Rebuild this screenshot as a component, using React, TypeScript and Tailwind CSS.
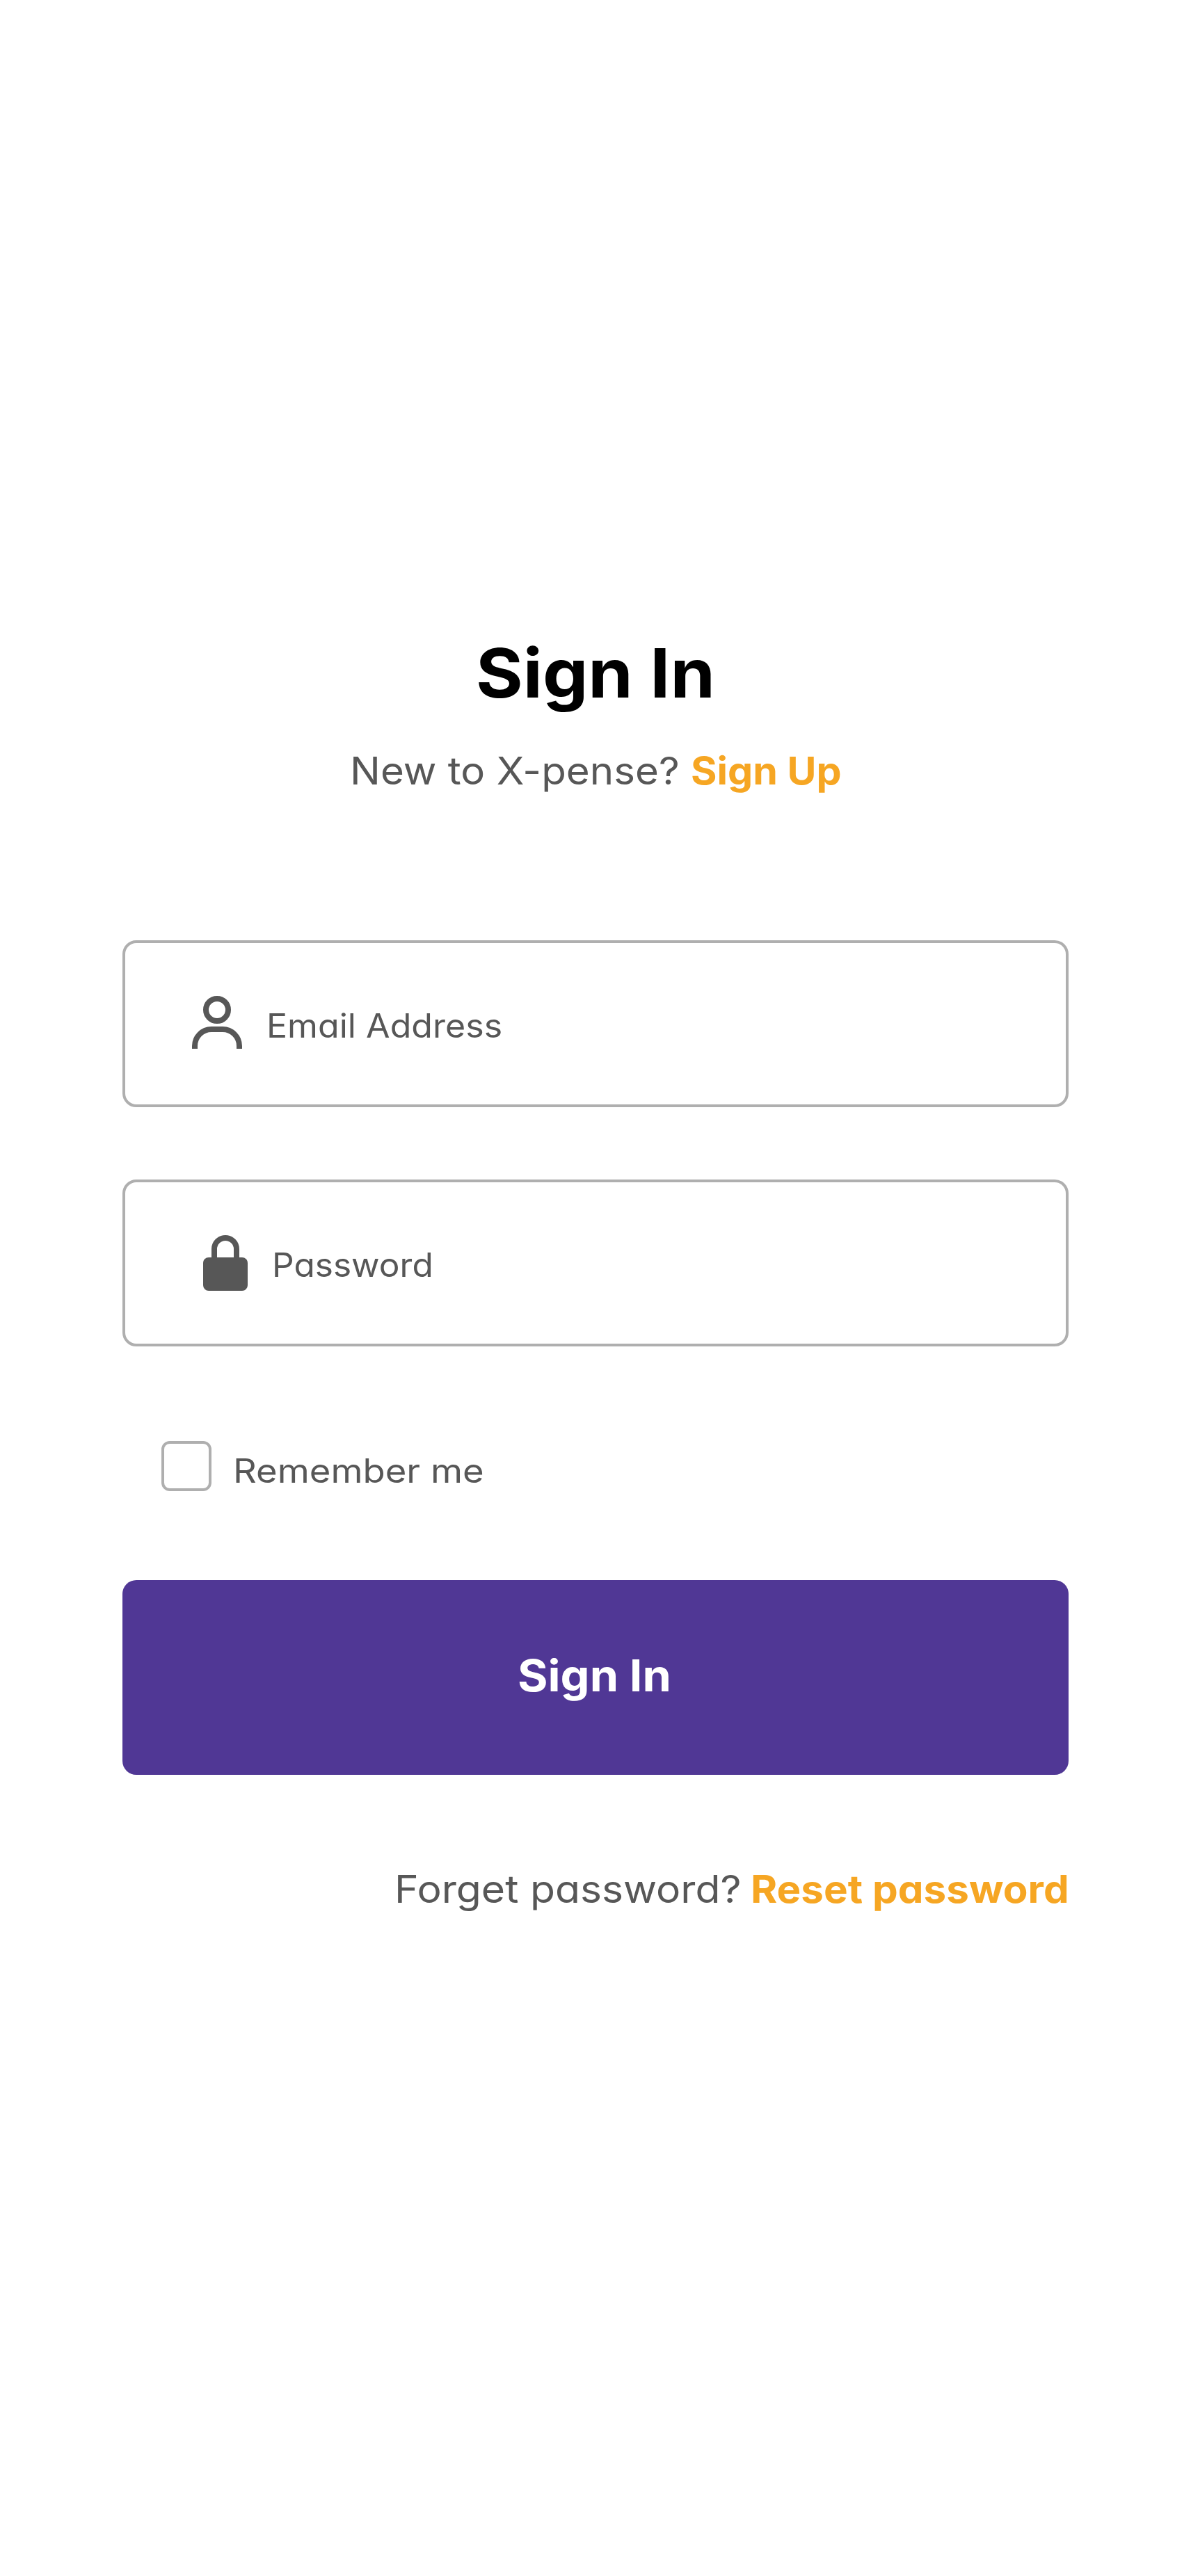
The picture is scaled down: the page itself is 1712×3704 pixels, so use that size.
import type { ReactNode } from 'react';

function PersonIcon() {
  return (
    <svg className="h-[88px] w-20 shrink-0" viewBox="0 0 80 88" fill="none" stroke="currentColor" strokeWidth="8">
      <circle cx="40" cy="24" r="16" />
      <path d="M8 80v-4a24 24 0 0 1 24-24h16a24 24 0 0 1 24 24v4" />
    </svg>
  );
}

function LockIcon() {
  return (
    <svg className="h-[88px] w-20 shrink-0" viewBox="0 0 80 88" fill="none">
      <rect x="4" y="36" width="64" height="48" rx="8" fill="currentColor" />
      <path d="M20 40V24a16 16 0 0 1 32 0v16" stroke="currentColor" strokeWidth="8" />
    </svg>
  );
}

function Field({ className, children }: { className: string; children: ReactNode }) {
  return (
    <div className={`flex h-60 items-start rounded-[20px] border-4 border-[#afafaf] pt-[72px] text-[47.5px] leading-[60px] ${className}`}>
      {children}
    </div>
  );
}

export default function App() {
  return (
    <main className="min-h-[3704px] w-[1712px] bg-white px-44 pt-[908px] font-['Inter',sans-serif] whitespace-nowrap text-[#575757] [font-feature-settings:'cv11']">
      <h1 className="flex h-[120px] pl-[508px] text-[98px] leading-[120px] font-bold text-black">
        <span className="origin-left scale-x-[1.057]">Sign In</span>
      </h1>
      <p className="mt-10 flex h-20 pl-[327.4px] text-[55px] leading-[80px]">
        <span className="w-[489.2px] shrink-0 origin-left scale-x-[1.059]">New to X-pense?</span>
        <a className="origin-left scale-x-[1.042] font-bold text-[#f6a623]">Sign Up</a>
      </p>

      <form className="mt-[204px]">
        <Field className="gap-[31px] pl-[92px]">
          <PersonIcon />
          <span className="mt-[17px] origin-left scale-x-[1.055]">Email Address</span>
        </Field>
        <Field className="mt-[104px] gap-[23px] pl-[108px]">
          <LockIcon />
          <span className="mt-[17px] origin-left scale-x-[1.044]">Password</span>
        </Field>
        <label className="mt-[136px] ml-14 flex h-[72px] items-start gap-[31px] text-[47.5px] leading-[60px]">
          <span className="size-[72px] shrink-0 rounded-xl border-4 border-[#afafaf]" />
          <span className="mt-[13px] origin-left scale-x-[1.107]">Remember me</span>
        </label>
        <button type="button" className="mt-32 flex h-[280px] w-full items-start rounded-[20px] bg-[#503795] pt-[97px] pl-[567.5px] text-[63px] leading-[80px] font-bold text-white">
          <span className="origin-left scale-x-[1.056]">Sign In</span>
        </button>
      </form>

      <p className="mt-[124px] flex h-20 pl-[391px] text-[55px] leading-[80px]">
        <span className="w-[512px] shrink-0 origin-left scale-x-[1.069]">Forget password?</span>
        <a className="origin-left scale-x-[1.061] font-bold text-[#f6a623]">Reset password</a>
      </p>
    </main>
  );
}
